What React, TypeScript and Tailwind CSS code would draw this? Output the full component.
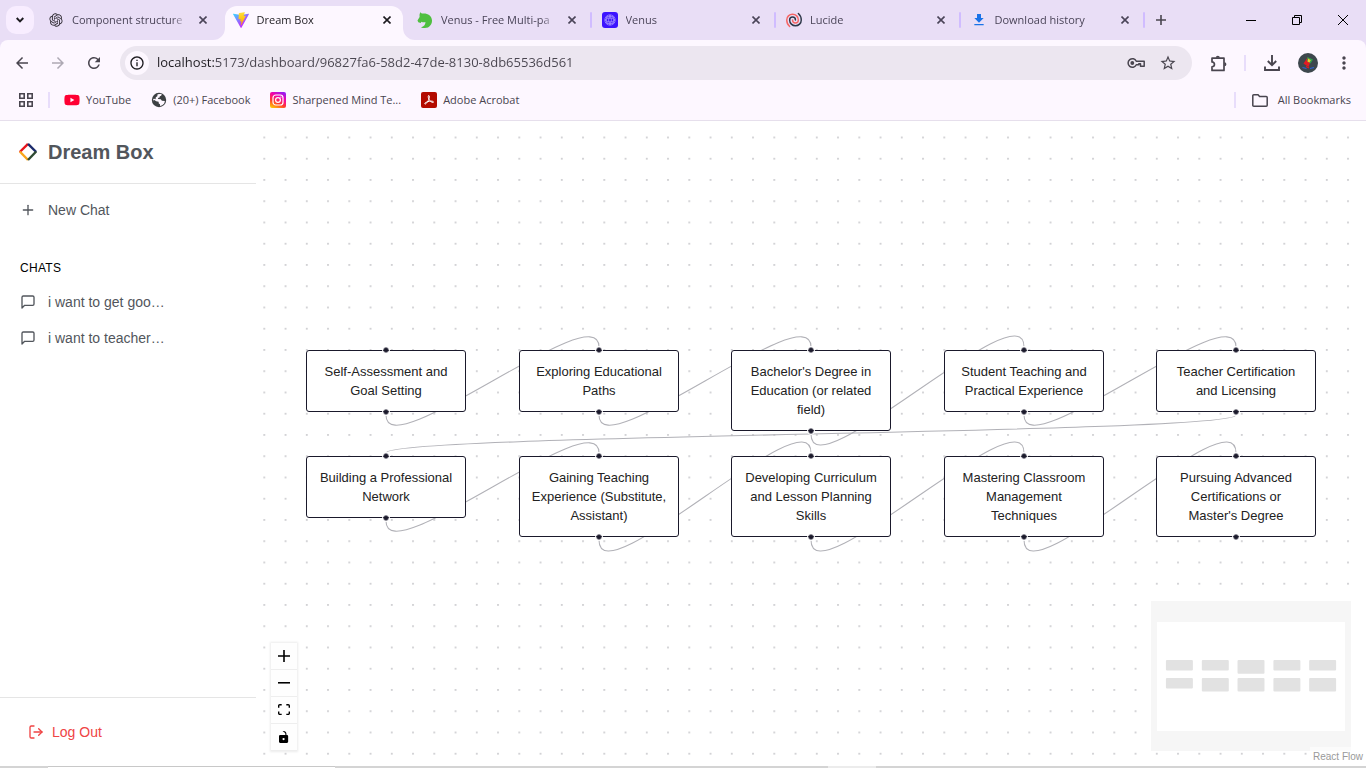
import type { ReactNode } from "react";
import { LogOut, Plus } from "lucide-react";
import {
  MdArrowBack,
  MdArrowForward,
  MdDownload,
  MdInfoOutline,
  MdMoreVert,
  MdRefresh,
  MdStarBorder,
} from "react-icons/md";
import { FaYoutube } from "react-icons/fa";
import { RiOpenaiFill } from "react-icons/ri";

/* ---------- Logos ---------- */

function ViteLogo() {
  return (
    <svg viewBox="0 0 256 257" className="size-4 shrink-0" aria-hidden="true">
      <defs>
        <linearGradient id="vite-a" x1="-.8%" x2="57.6%" y1="7.7%" y2="78.4%">
          <stop offset="0%" stopColor="#41D1FF" />
          <stop offset="100%" stopColor="#BD34FE" />
        </linearGradient>
        <linearGradient id="vite-b" x1="43.4%" x2="50.3%" y1="2.2%" y2="89%">
          <stop offset="0%" stopColor="#FFEA83" />
          <stop offset="8.3%" stopColor="#FFDD35" />
          <stop offset="100%" stopColor="#FFA800" />
        </linearGradient>
      </defs>
      <path
        fill="url(#vite-a)"
        d="M255.153 37.938L134.897 252.976c-2.483 4.44-8.862 4.466-11.382.048L.875 37.958c-2.746-4.814 1.371-10.646 6.827-9.67l120.385 21.517a6.537 6.537 0 0 0 2.322-.004l117.867-21.483c5.438-.991 9.574 4.796 6.877 9.62Z"
      />
      <path
        fill="url(#vite-b)"
        d="M185.432.063L96.44 17.501a3.268 3.268 0 0 0-2.634 3.014l-5.474 92.456a3.268 3.268 0 0 0 3.997 3.378l24.777-5.718c2.318-.535 4.413 1.507 3.936 3.838l-7.361 36.047c-.495 2.426 1.782 4.5 4.151 3.78l15.304-4.649c2.372-.72 4.652 1.36 4.15 3.788l-11.698 56.621c-.732 3.542 3.979 5.473 5.943 2.437l1.313-2.028l72.516-144.72c1.215-2.423-.88-5.186-3.54-4.672l-25.505 4.922c-2.396.462-4.435-1.77-3.759-4.114l16.646-57.705c.677-2.35-1.37-4.583-3.769-4.113Z"
      />
    </svg>
  );
}

function HorseLogo() {
  return (
    <svg viewBox="0 0 16 16" className="size-4 shrink-0" aria-hidden="true">
      <path
        fill="#4fbf40"
        d="M3.2.2 4.8 1.600C9.500.6 14.800 3 15 8.600c.2 3.200-1.600 5.600-4 6.900-1.900.7-5 .6-7-.1 3-1 4.600-2.700 4.400-5.300-1.500.5-3 .2-3.900-.4L3.600 11 1.300 10.300.5 8.500 2.600 5 2.500 2.700Z"
      />
    </svg>
  );
}

function VenusLogo() {
  return (
    <svg viewBox="0 0 16 16" className="size-4 shrink-0" aria-hidden="true">
      <rect width="16" height="16" rx="3" fill="#3d14ff" />
      <g fill="none" stroke="#a99afc" strokeWidth=".7">
        <circle cx="8" cy="8" r="5.200" />
        <path d="M4 5.500q4-3 8 0M3.500 10.500q4.500 3 9 0M5.500 4q-3 4 0 8M10.500 4q3 4 0 8M3 8q5-4 10 0M3 8q5 4 10 0M8 3q-3 5 0 10M8 3q3 5 0 10" />
      </g>
    </svg>
  );
}

function LucideLogo() {
  return (
    <svg viewBox="1 1 22 22" className="size-4 shrink-0" fill="none" strokeWidth="2" strokeLinecap="round" aria-hidden="true">
      <path
        stroke="#2D3748"
        d="M14 12C14 9.791 12.209 8 10 8C7.791 8 6 9.791 6 12C6 16.418 9.582 20 14 20C18.418 20 22 16.418 22 12C22 8.446 20.455 5.253 18 3.056"
      />
      <path
        stroke="#F56565"
        d="M10 12C10 14.209 11.791 16 14 16C16.209 16 18 14.209 18 12C18 7.582 14.418 4 10 4C5.582 4 2 7.582 2 12C2 15.584 3.571 18.801 6.063 21"
      />
    </svg>
  );
}

function GlobeLogo() {
  return (
    <svg viewBox="0 0 16 16" className="size-4" aria-hidden="true">
      <circle cx="8" cy="8" r="7.200" fill="#3c4043" />
      <path
        fill="#fdf7ff"
        d="M6.600 2.300 10.800 1.800 10.200 3.700 8.800 4.200 8.600 5.600 6.900 6.100 7.200 7.100 9.800 7.200 10.900 8.700 13.900 8.900 13.200 11.600 11.200 13.300 9 14 9 12.200 7.800 11.400 7.600 9.800 5.200 9.300 2.600 7.600 2.100 9.500 2 7 3.300 6.700 4.600 7.200 4.800 5.200 6.300 4.300Z"
      />
    </svg>
  );
}

function InstagramLogo() {
  return (
    <svg viewBox="0 0 16 16" className="size-4" aria-hidden="true">
      <defs>
        <linearGradient id="ig" x1="0.200" y1="1" x2="0.700" y2="0">
          <stop offset="0" stopColor="#ffc107" />
          <stop offset=".35" stopColor="#ff3d2e" />
          <stop offset=".7" stopColor="#f400a8" />
          <stop offset="1" stopColor="#9a1cf0" />
        </linearGradient>
      </defs>
      <rect width="16" height="16" rx="2" fill="url(#ig)" />
      <rect x="3" y="3" width="10" height="10" rx="2.800" fill="none" stroke="#fff" strokeWidth="1.200" />
      <circle cx="8" cy="8" r="2.400" fill="none" stroke="#fff" strokeWidth="1.200" />
      <circle cx="10.900" cy="5.100" r=".7" fill="#fff" />
    </svg>
  );
}

function AcrobatLogo() {
  return (
    <svg viewBox="0 0 16 16" className="size-4" aria-hidden="true">
      <rect width="16" height="16" rx="2" fill="#b30b00" />
      <path
        d="M7.700 3.500c1.200 0 .7 3.200-.6 5.300-1 1.900-2.500 3.700-3.200 3.200-.8-.8 1.700-2.300 4.500-2.700 2.300-.4 4.300-.1 4.100.8-.3 1-2.500-.1-3.800-1.600C7.300 7 6.700 3.600 7.700 3.500Z"
        fill="none"
        stroke="#fff"
        strokeWidth="1"
      />
    </svg>
  );
}

function AppsIcon() {
  return (
    <svg viewBox="0 0 14 14" className="size-3.5" fill="none" stroke="#49454f" strokeWidth="1.600" aria-hidden="true">
      <path d="M.8.8h4.400v4.400H.8zM8.800.8h4.400v4.400H8.800zM.8 8.800h4.400v4.400H.8zM8.800 8.800h4.400v4.400H8.800z" />
    </svg>
  );
}

function CloseIcon() {
  return (
    <svg viewBox="0 0 8 8" className="size-2" fill="none" stroke="currentColor" strokeWidth="1.600" aria-hidden="true">
      <path d="M.5.5 7.500 7.500M7.500.5.5 7.500" />
    </svg>
  );
}

function KeyIcon() {
  return (
    <svg viewBox="0 0 18 12" className="h-3 w-[18px]" fill="none" stroke="#49454f" strokeWidth="1.500" aria-hidden="true">
      <path d="M9.300 4.200A4.300 4.300 0 1 0 9.300 7.800H11.800V6.800H13.500V9.300H17.200V4.200Z" strokeLinejoin="round" />
      <circle cx="5.300" cy="6" r="1.900" fill="#49454f" stroke="none" />
    </svg>
  );
}

function PuzzleIcon() {
  return (
    <svg viewBox="0 0 17 17" className="size-[17px]" fill="none" stroke="#49454f" strokeWidth="1.700" aria-hidden="true">
      <path d="M2 3.200H14V15.400H2V11.800A2.400 2.400 0 0 0 2 6.900Z" strokeLinejoin="round" />
      <path d="M5.800 2.800A2 2 0 0 1 9.800 2.800ZM14.400 7.200A2 2 0 0 1 14.400 11.200Z" fill="#49454f" stroke="none" />
    </svg>
  );
}

function FolderIcon() {
  return (
    <svg viewBox="0 0 16 13" className="h-[13px] w-4" fill="none" stroke="#49454f" strokeWidth="1.500" aria-hidden="true">
      <path d="M.8 1.800Q.8.8 1.800.8H6L7.600 2.600H14.200Q15.200 2.600 15.200 3.600V11.200Q15.200 12.200 14.200 12.200H1.800Q.8 12.200.8 11.200Z" />
    </svg>
  );
}

function TrayDownloadIcon() {
  return (
    <svg viewBox="0 0 16 16" className="size-4" fill="none" stroke="#49454f" strokeWidth="1.900" aria-hidden="true">
      <path d="M8 0v10M3.800 6 8 10.200 12.200 6M1 11.500V15H15V11.500" />
    </svg>
  );
}

function MessageIcon() {
  return (
    <svg
      viewBox="0 0 24 24"
      className="size-4"
      fill="none"
      stroke="currentColor"
      strokeWidth="2"
      strokeLinecap="round"
      strokeLinejoin="round"
      aria-hidden="true"
    >
      <path d="M21 15a2 2 0 0 1-2 2H7l-4 4V5a2 2 0 0 1 2-2h14a2 2 0 0 1 2 2z" />
    </svg>
  );
}

function Avatar() {
  return (
    <svg viewBox="0 0 20 20" className="size-5" aria-hidden="true">
      <circle cx="10" cy="10" r="10" fill="#3d474d" />
      <path d="M9.500 4.500 13 7.500 10.500 14 5.500 10.500Z" fill="#e21b23" />
      <path d="M9.500 4 15 6.500 12.500 10.500 9 8Z" fill="#2f9d4c" />
      <path d="M10.200 5.600 12.800 7.200 11.400 9.500 9.500 8.500Z" fill="#f2c62e" />
      <path d="M4.500 14.500 8.500 15.500M12 15.500 16 14.500" stroke="#2a62d8" strokeWidth="1.200" />
      <path d="M8 13.500 11 15" stroke="#e21b23" strokeWidth="1.300" />
    </svg>
  );
}

function DreamLogo() {
  return (
    <svg viewBox="0 0 20 20" className="size-5" fill="none" strokeWidth="2.400" aria-hidden="true">
      <path d="M10 1.800 1.800 10" stroke="#e8141c" />
      <path d="M1.800 9.500 10 18" stroke="#f9a61a" />
      <path d="M10 1.800 18.200 10" stroke="#1b2a6b" />
      <path d="M18.200 9.500 10 18" stroke="#2f4a32" />
    </svg>
  );
}

/* ---------- Browser chrome ---------- */

type Tab = { title: string; icon: ReactNode; active?: boolean; divider?: boolean };

const tabs: Tab[] = [
  { title: "Component structure", icon: <RiOpenaiFill className="size-4 shrink-0 text-[#2f2b33]" /> },
  { title: "Dream Box", icon: <ViteLogo />, active: true },
  { title: "Venus - Free Multi-pa", icon: <HorseLogo />, divider: true },
  { title: "Venus", icon: <VenusLogo />, divider: true },
  { title: "Lucide", icon: <LucideLogo />, divider: true },
  { title: "Download history", icon: <MdDownload className="size-4 shrink-0 text-[#1a73e8]" />, divider: true },
];

function TabFoot({ side }: { side: "left" | "right" }) {
  return (
    <svg
      viewBox="0 0 12 12"
      className={side === "left" ? "absolute right-full bottom-0 size-3" : "absolute bottom-0 left-full size-3"}
      aria-hidden="true"
    >
      <path fill="#fdf7ff" d={side === "left" ? "M12 0V12H0A12 12 0 0 0 12 0Z" : "M0 0V12H12A12 12 0 0 1 0 0Z"} />
    </svg>
  );
}

function BrowserTab({ title, icon, active, divider }: Tab) {
  return (
    <div className="flex min-w-0 flex-1 items-center pt-1.5">
      <div
        className={
          active
            ? "relative flex h-full min-w-0 flex-1 items-center rounded-t-xl bg-[#fdf7ff] pb-1.5 pl-2 text-[#1d1b20]"
            : "flex h-full min-w-0 flex-1 items-center pb-1.5 pl-2 text-[#4a4458]"
        }
      >
        {active && <TabFoot side="left" />}
        {icon}
        <span className="ml-2 min-w-0 flex-1 overflow-hidden mask-r-from-85% whitespace-nowrap">{title}</span>
        <button type="button" aria-label={`Close ${title}`} className="mr-2 ml-1.5 flex size-4 items-center justify-center">
          <CloseIcon />
        </button>
        {active && <TabFoot side="right" />}
      </div>
      <span className={divider ? "mr-0.5 mb-1.5 ml-0.5 h-4 w-0.5 rounded bg-[#d0bcff]" : "ml-1 w-0.5"} />
    </div>
  );
}

function TabStrip() {
  return (
    <div className="flex h-10 bg-[#e9def6] text-[11px]">
      <button
        type="button"
        aria-label="Search tabs"
        className="mt-1.5 ml-1.5 flex size-7 shrink-0 items-center justify-center rounded-[10px] bg-[#f8edff]"
      >
        <svg viewBox="0 0 8 6" className="h-1.5 w-2" fill="none" stroke="#1d1b20" strokeWidth="1.900" aria-hidden="true">
          <path d="M.7 1 4 4.400 7.300 1" />
        </svg>
      </button>
      <div className="ml-1.5 flex w-[1107px] min-w-0">
        {tabs.map((tab) => (
          <BrowserTab key={tab.title} {...tab} />
        ))}
      </div>
      <button type="button" aria-label="New tab" className="flex w-7 items-center justify-center text-[#49454f]">
        <svg viewBox="0 0 10 10" className="size-2.5" fill="none" stroke="currentColor" strokeWidth="1.600" aria-hidden="true">
          <path d="M5 0V10M0 5H10" />
        </svg>
      </button>
      <div className="ml-auto flex text-black">
        <button type="button" aria-label="Minimize" className="flex w-[46px] items-center justify-center">
          <span className="h-px w-2.5 bg-black" />
        </button>
        <button type="button" aria-label="Restore" className="flex w-[46px] items-center justify-center">
          <svg viewBox="0 0 10 10" className="size-2.5" fill="none" stroke="currentColor" aria-hidden="true">
            <path d="M.5 2.500h7v7h-7zM2.500 2.500v-2h7v7h-2" />
          </svg>
        </button>
        <button type="button" aria-label="Close window" className="flex w-[46px] items-center justify-center">
          <svg viewBox="0 0 10 10" className="size-2.5" fill="none" stroke="currentColor" aria-hidden="true">
            <path d="M0 0 10 10M10 0 0 10" />
          </svg>
        </button>
      </div>
    </div>
  );
}

function Toolbar() {
  return (
    <div className="bg-[#e9def6]">
      <div className="flex h-[46px] items-center rounded-t-lg bg-[#fdf7ff] px-3 text-[#49454f]">
        <button type="button" aria-label="Back" className="flex w-5 justify-center">
          <MdArrowBack className="size-[18px]" />
        </button>
        <button type="button" aria-label="Forward" className="ml-4 flex w-5 justify-center text-[#aea9b4]">
          <MdArrowForward className="size-[18px]" />
        </button>
        <button type="button" aria-label="Reload" className="ml-4 flex w-5 justify-center">
          <MdRefresh className="size-[18px]" />
        </button>
        <div className="ml-4 flex h-[34px] min-w-0 flex-1 items-center rounded-full bg-[#ece6f0] pr-[15px] pl-[5px]">
          <button
            type="button"
            aria-label="Site information"
            className="flex size-6 shrink-0 items-center justify-center rounded-full bg-[#fdf7ff]"
          >
            <MdInfoOutline className="size-4 text-[#1d1b20]" />
          </button>
          <input
            type="text"
            aria-label="Address"
            defaultValue="localhost:5173/dashboard/96827fa6-58d2-47de-8130-8db65536d561"
            className="ml-2 min-w-0 flex-1 bg-[linear-gradient(to_right,#1d1b20_57px,#49454f_57px)] bg-clip-text text-[13px] text-transparent outline-none"
          />
          <button type="button" aria-label="Saved passwords">
            <KeyIcon />
          </button>
          <button type="button" aria-label="Bookmark this page" className="ml-3.5">
            <MdStarBorder className="size-[18px]" />
          </button>
        </div>
        <button type="button" aria-label="Extensions" className="ml-[18px]">
          <PuzzleIcon />
        </button>
        <span className="ml-[17px] h-4 w-0.5 bg-[#e8ddfb]" />
        <button type="button" aria-label="Downloads" className="ml-[18px]">
          <TrayDownloadIcon />
        </button>
        <button type="button" aria-label="Profile" className="ml-[18px]">
          <Avatar />
        </button>
        <button type="button" aria-label="Menu" className="ml-4">
          <MdMoreVert className="size-5" />
        </button>
      </div>
    </div>
  );
}

function Bookmark({ icon, label }: { icon: ReactNode; label: string }) {
  return (
    <a href="#" className="flex items-center gap-1.5 whitespace-nowrap">
      {icon}
      {label}
    </a>
  );
}

function BookmarksBar() {
  return (
    <div className="flex h-[35px] items-center border-b border-[#e6dfec] bg-[#fdf7ff] pr-[15px] pb-1.5 pl-[19px] text-[11px] text-[#49454f]">
      <button type="button" aria-label="Apps">
        <AppsIcon />
      </button>
      <span className="ml-[15px] h-4 w-0.5 bg-[#e8ddfb]" />
      <nav className="ml-3.5 flex gap-5" aria-label="Bookmarks">
        <Bookmark icon={<FaYoutube className="size-4 text-[#ff0033]" />} label="YouTube" />
        <Bookmark icon={<GlobeLogo />} label="(20+) Facebook" />
        <Bookmark icon={<InstagramLogo />} label="Sharpened Mind Te..." />
        <Bookmark icon={<AcrobatLogo />} label="Adobe Acrobat" />
      </nav>
      <span className="ml-auto h-4 w-0.5 bg-[#e8ddfb]" />
      <button type="button" className="ml-4 flex items-center gap-2.5 whitespace-nowrap">
        <FolderIcon />
        All Bookmarks
      </button>
    </div>
  );
}

/* ---------- Sidebar ---------- */

const chats = ["i want to get goo…", "i want to teacher…"];

function Sidebar() {
  return (
    <aside className="flex w-64 shrink-0 flex-col bg-white text-sm text-[#52565c]">
      <header className="flex h-[63px] items-center gap-2.5 border-b border-[#e5e5e5] pl-[18px]">
        <DreamLogo />
        <h1 className="text-xl font-bold">Dream Box</h1>
      </header>
      <button type="button" className="mt-2 flex h-9 items-center gap-3 pl-5">
        <Plus className="size-4" strokeWidth={2} />
        New Chat
      </button>
      <h2 className="mt-8 pl-5 text-xs leading-4 tracking-wide text-black">CHATS</h2>
      <nav className="mt-2 flex flex-col">
        {chats.map((chat) => (
          <a key={chat} href="#" className="flex h-9 items-center gap-3 pl-5">
            <MessageIcon />
            {chat}
          </a>
        ))}
      </nav>
      <footer className="mt-auto flex h-[69px] items-center border-t border-[#e5e5e5] pl-7 text-[#ef4444]">
        <button type="button" className="flex items-center gap-2">
          <LogOut className="size-4" strokeWidth={2} />
          Log Out
        </button>
      </footer>
    </aside>
  );
}

/* ---------- Flow canvas ---------- */

type FlowNode = { label: string; x: number; y: number; h: number };

const NODE_W = 160;
const ZOOM = 1.0625;

const nodes: FlowNode[] = [
  { label: "Self-Assessment and Goal Setting", x: 50, y: 229, h: 62 },
  { label: "Exploring Educational Paths", x: 263, y: 229, h: 62 },
  { label: "Bachelor's Degree in Education (or related field)", x: 475, y: 229, h: 81 },
  { label: "Student Teaching and Practical Experience", x: 688, y: 229, h: 62 },
  { label: "Teacher Certification and Licensing", x: 900, y: 229, h: 62 },
  { label: "Building a Professional Network", x: 50, y: 335, h: 62 },
  { label: "Gaining Teaching Experience (Substitute, Assistant)", x: 263, y: 335, h: 81 },
  { label: "Developing Curriculum and Lesson Planning Skills", x: 475, y: 335, h: 81 },
  { label: "Mastering Classroom Management Techniques", x: 688, y: 335, h: 81 },
  { label: "Pursuing Advanced Certifications or Master's Degree", x: 900, y: 335, h: 81 },
];

function edgePath(from: FlowNode, to: FlowNode) {
  const sx = from.x + NODE_W / 2;
  const sy = from.y + from.h + 3;
  const tx = to.x + NODE_W / 2;
  const ty = to.y - 3;
  const distance = (ty - sy) / ZOOM;
  const offset = (distance >= 0 ? distance * 0.5 : 6.25 * Math.sqrt(-distance)) * ZOOM;
  return `M${sx},${sy} C${sx},${sy + offset} ${tx},${ty - offset} ${tx},${ty}`;
}

const handleClass =
  "absolute left-1/2 size-1 -translate-x-1/2 rounded-full bg-[#1a192b] ring-1 ring-[#1a192b]/60 outline outline-offset-1 outline-white";

function ControlButton({ label, children }: { label: string; children: ReactNode }) {
  return (
    <button
      type="button"
      aria-label={label}
      className="flex h-[27px] w-[26px] items-center justify-center border-b border-[#eeeeee] bg-[#fefefe]"
    >
      {children}
    </button>
  );
}

function Controls() {
  return (
    <div className="absolute bottom-[15px] left-[15px] flex flex-col shadow-[0_0_2px_1px_rgba(0,0,0,0.08)]">
      <ControlButton label="Zoom in">
        <svg viewBox="0 0 32 32" className="size-3">
          <path d="M32 18.133H18.133V32h-4.266V18.133H0v-4.266h13.867V0h4.266v13.867H32z" />
        </svg>
      </ControlButton>
      <ControlButton label="Zoom out">
        <svg viewBox="0 0 32 5" className="w-3">
          <path d="M0 0h32v4.200H0z" />
        </svg>
      </ControlButton>
      <ControlButton label="Fit view">
        <svg viewBox="0 0 32 30" className="w-3">
          <path d="M3.692 4.630c0-.53.4-.938.939-.938h5.215V0H4.708C2.130 0 0 2.054 0 4.630v5.216h3.692V4.631zM27.354 0h-5.200v3.692h5.170c.53 0 .984.4.984.939v5.215H32V4.631A4.624 4.624 0 0027.354 0zm.954 24.830c0 .532-.4.94-.939.94h-5.215v3.768h5.215c2.577 0 4.631-2.130 4.631-4.707v-5.139h-3.692v5.139zm-23.677.94c-.531 0-.939-.4-.939-.94v-5.138H0v5.139c0 2.577 2.130 4.707 4.708 4.707h5.138V25.770H4.631z" />
        </svg>
      </ControlButton>
      <ControlButton label="Toggle interactivity">
        <svg viewBox="0 0 25 32" className="h-3">
          <path d="M21.333 10.667H19.810V7.619C19.810 3.429 16.380 0 12.190 0c-4.114 1.828-1.370 2.133.305 2.438 1.676.305 4.420 2.590 4.420 5.181v3.048H3.047A3.056 3.056 0 000 13.714v15.238A3.056 3.056 0 003.048 32h18.285a3.056 3.056 0 003.048-3.048V13.714a3.056 3.056 0 00-3.048-3.047zM12.190 24.533a3.056 3.056 0 01-3.047-3.047 3.056 3.056 0 013.047-3.048 3.056 3.056 0 013.048 3.048 3.056 3.056 0 01-3.048 3.047z" />
        </svg>
      </ControlButton>
    </div>
  );
}

function MiniMap() {
  const scale = 0.1685;
  return (
    <svg
      viewBox="0 0 200 150"
      className="absolute right-[15px] bottom-[15px] h-[150px] w-[200px] bg-[#f6f6f6]"
      role="img"
      aria-label="Mini map"
    >
      <rect x="6" y="21" width="188" height="109" fill="#fff" />
      {nodes.map((n) => (
        <rect
          key={n.label}
          x={6.500 + n.x * scale}
          y={20.500 + n.y * scale}
          width={NODE_W * scale}
          height={n.h * scale}
          rx="1"
          fill="#e2e2e2"
        />
      ))}
    </svg>
  );
}

function FlowCanvas() {
  return (
    <main className="relative min-w-0 flex-1 overflow-hidden bg-white">
      <svg className="absolute inset-0 size-full" aria-hidden="true">
        <defs>
          <pattern id="dots" x="-2.300" y="5.900" width="21.250" height="21.250" patternUnits="userSpaceOnUse">
            <circle cx="10.600" cy="10.600" r=".62" fill="#75757e" />
          </pattern>
        </defs>
        <rect width="100%" height="100%" fill="url(#dots)" />
        <g fill="none" stroke="#b1b1b7" strokeWidth="1.060">
          {nodes.slice(1).map((node, i) => (
            <path key={node.label} d={edgePath(nodes[i], node)} />
          ))}
        </g>
      </svg>
      {nodes.map((node) => (
        <div
          key={node.label}
          className="absolute w-40 rounded-[3px] border border-[#1a192b] bg-white px-2.5 py-[11px] text-center text-[13px] leading-[19px] text-[#222222]"
          style={{ left: node.x, top: node.y }}
        >
          <span className={`${handleClass} -top-[3px]`} />
          {node.label}
          <span className={`${handleClass} -bottom-[3px]`} />
        </div>
      ))}
      <Controls />
      <MiniMap />
      <a
        href="#"
        className="absolute right-0 bottom-0 bg-white/50 px-[3px] py-0.5 text-[10px] leading-[15px] text-[#999999]"
      >
        React Flow
      </a>
    </main>
  );
}

export default function App() {
  return (
    <div className="flex h-screen flex-col overflow-hidden bg-white font-['Liberation_Sans',Arial,sans-serif]">
      <div className="shrink-0 font-['Open_Sans','Noto_Sans',sans-serif]">
        <TabStrip />
        <Toolbar />
        <BookmarksBar />
      </div>
      <div className="flex min-h-0 flex-1">
        <Sidebar />
        <FlowCanvas />
      </div>
      <div className="flex h-0.5 shrink-0 bg-[#d4d4d4]">
        <span className="ml-12 w-[287px] border-t border-[#c8c8c8] bg-white" />
        <span className="ml-[493px] w-12 bg-[#ececec]" />
      </div>
    </div>
  );
}
